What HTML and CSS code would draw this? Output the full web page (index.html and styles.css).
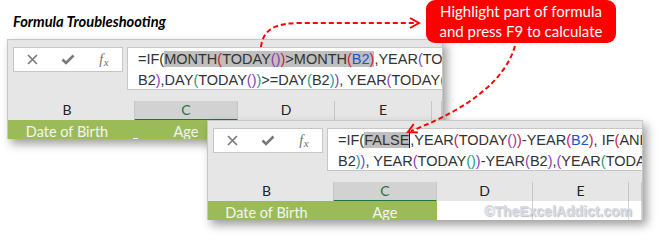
FILE: index.html
```html
<!DOCTYPE html>
<html>
<head>
<meta charset="utf-8">
<link rel="stylesheet" href="styles.css">
</head>
<body>
<div class="canvas">
  <h1 class="title">Formula Troubleshooting</h1>

  <div class="panel p1">
    <div class="bar">
      <div class="btns">
        <span class="slot"><svg width="11" height="11" viewBox="0 0 11 11"><path d="M1 1L10 10M10 1L1 10" stroke="#787878" stroke-width="1.6" fill="none"/></svg></span>
        <span class="slot"><svg width="14" height="11" viewBox="0 0 14 11"><path d="M1.5 5.5L5 9L12.5 1.5" stroke="#787878" stroke-width="2.6" fill="none"/></svg></span>
        <span class="slot fx"><i>f</i><i class="x">x</i></span>
      </div>
      <div class="fbox">
        <div class="line">=IF(<span class="hl">MONTH<span class="r">(</span>TODAY<span class="p">()</span><span class="r">)</span>&gt;MONTH<span class="r">(</span><span class="b">B2</span><span class="r">)</span></span>,YEAR<span class="p">(</span>TODAY<span class="g">()</span><span class="p">)</span>-YEAR(B2)</div>
        <div class="line">B2<span class="p">)</span>,DAY<span class="g">(</span>TODAY<span class="p">()</span><span class="g">)</span>&gt;=DAY<span class="g">(</span>B2<span class="g">)</span><span class="p">)</span>, YEAR<span class="p">(</span>TODAY<span class="g">()</span><span class="p">)</span></div>
      </div>
    </div>
    <div class="cols c1 head">
      <div class="hc bcol">B</div>
      <div class="hc sel">C</div>
      <div class="hc">D</div>
      <div class="hc">E</div>
      <div class="hc"></div>
    </div>
    <div class="cols c1 data">
      <div class="dc green bcol">Date of Birth</div>
      <div class="dc green">Age</div>
      <div class="dc"></div>
      <div class="dc"></div>
      <div class="dc"></div>
    </div>
    <span class="handle"></span>
  </div>

  <div class="panel p2">
    <div class="bar">
      <div class="btns">
        <span class="slot"><svg width="11" height="11" viewBox="0 0 11 11"><path d="M1 1L10 10M10 1L1 10" stroke="#787878" stroke-width="1.6" fill="none"/></svg></span>
        <span class="slot"><svg width="14" height="11" viewBox="0 0 14 11"><path d="M1.5 5.5L5 9L12.5 1.5" stroke="#787878" stroke-width="2.6" fill="none"/></svg></span>
        <span class="slot fx"><i>f</i><i class="x">x</i></span>
      </div>
      <div class="fbox">
        <div class="line">=IF(<span class="hl">FALSE</span><span class="caret"></span>,YEAR<span class="r">(</span>TODAY<span class="p">()</span><span class="r">)</span>-YEAR<span class="r">(</span><span class="b">B2</span><span class="r">)</span>, IF<span class="r">(</span>AND<span class="p">(</span>MONTH</div>
        <div class="line">B2<span class="g">)</span><span class="p">)</span>, YEAR<span class="p">(</span>TODAY<span class="g">()</span><span class="p">)</span>-YEAR<span class="p">(</span>B2<span class="p">)</span>,<span class="p">(</span>YEAR<span class="g">(</span>TODAY<span class="p">()</span></div>
      </div>
    </div>
    <div class="cols c2 head">
      <div class="hc bcol">B</div>
      <div class="hc sel">C</div>
      <div class="hc">D</div>
      <div class="hc">E</div>
      <div class="hc"></div>
    </div>
    <div class="cols c2 data">
      <div class="dc green bcol">Date of Birth</div>
      <div class="dc green">Age</div>
      <div class="dc white"></div>
      <div class="dc white"></div>
      <div class="dc white"></div>
    </div>
  </div>

  <div class="watermark">©TheExcelAddict.com</div>

  <svg class="arrows" width="663" height="241" viewBox="0 0 663 241">
    <path d="M261,47 C263,28 278,23 300,23 L417,23" stroke="#ff0000" stroke-width="2" stroke-dasharray="5 3" fill="none"/>
    <path d="M410,18 L419,23 L410,28" stroke="#ff0000" stroke-width="2" fill="none"/>
    <path d="M515,46 C505,80 470,108 411,131" stroke="#ff0000" stroke-width="2" stroke-dasharray="5 3" fill="none"/>
    <path d="M413.7,124 L408,132 L417.9,132.5" stroke="#ff0000" stroke-width="2" fill="none"/>
  </svg>

  <div class="callout">Highlight part of formula<br>and press F9 to calculate</div>
</div>
</body>
</html>
```

FILE: styles.css
```css
* { box-sizing: border-box; }
html, body { margin: 0; padding: 0; background: #ffffff; }
.canvas {
  position: relative;
  width: 663px;
  height: 241px;
  overflow: hidden;
  font-family: "Liberation Sans", Arial, sans-serif;
}
.title {
  margin: 0;
  padding: 13px 0 0 13px;
  font-family: Lato, "Liberation Sans", sans-serif;
  font-style: italic;
  font-weight: 700;
  font-size: 14.7px;
  line-height: 16px;
  color: #000;
}
.panel {
  position: absolute;
  width: 436px;
  height: 100px;
  background: #e6e6e6;
  border: 1px solid #c6c6c6;
  border-bottom: 0;
  box-shadow: 4px 5px 9px rgba(0, 0, 0, 0.38);
  overflow: hidden;
}
.p1 { left: 7px; top: 39px; }
.p2 { left: 207px; top: 120px; }
.bar {
  display: flex;
  gap: 4px;
  padding: 7px 0 0 5px;
}
.btns {
  flex: 0 0 110px;
  height: 25px;
  display: flex;
  align-items: center;
  background: #ffffff;
  border: 1px solid #c6c6c6;
}
.slot {
  flex: 0 0 36px;
  height: 23px;
  display: flex;
  align-items: center;
  justify-content: center;
}
.fx {
  font-family: "Liberation Serif", serif;
  font-size: 14px;
  color: #707070;
  padding-top: 1px;
}
.fx .x { font-size: 11px; position: relative; top: 2px; margin-left: 0.5px; }
.fbox {
  flex: 1;
  height: 43px;
  background: #ffffff;
  border: 1px solid #c6c6c6;
  border-right: 0;
  padding: 1px 0 0 10px;
  font-size: 14.5px;
  line-height: 21px;
  color: #333333;
  white-space: nowrap;
  overflow: hidden;
}
.hl { background: #bfbfbf; }
.r { color: #d4163c; }
.p { color: #8a3cb8; }
.g { color: #16a07e; }
.b { color: #1a55cc; }
.caret {
  display: inline-block;
  width: 1px;
  height: 16px;
  background: #222;
  vertical-align: -3px;
}
.cols { display: grid; }
.c1 { grid-template-columns: 126px 104px 97px 97px 1fr; }
.c2 { grid-template-columns: 125px 104px 96px 96px 1fr; }
.head {
  margin-top: 11px;
  height: 19px;
}
.hc {
  font-family: Lato, "Liberation Sans", sans-serif;
  font-size: 14px;
  line-height: 18px;
  color: #222;
  text-align: center;
  border-right: 1px solid #c6c6c6;
  border-bottom: 1px solid #c6c6c6;
}
.hc.bcol { border-right: 0; padding-right: 8px; }
.hc.sel {
  background: #d2d2d2;
  color: #217346;
  border-bottom: 2px solid #217346;
  border-left: 1px solid #c6c6c6;
}
.data { height: 19px; }
.dc {
  height: 19px;
  overflow: hidden;
  font-family: Lato, "Liberation Sans", sans-serif;
  font-size: 14.5px;
  line-height: 19px;
  padding-top: 2px;
  text-align: center;
  color: #f4f4f4;
}
.dc.bcol { padding-right: 8px; }
.green { background: #9bbb59; }
.white { background: #ffffff; border-right: 1px solid #d4d4d4; }
.handle {
  position: absolute;
  left: 125px;
  top: 98px;
  width: 5px;
  height: 1px;
  background: #ffffff;
}
.watermark {
  position: absolute;
  left: 484px;
  top: 203px;
  font-family: "Liberation Sans", Arial, sans-serif;
  font-weight: 700;
  font-size: 14px;
  line-height: 16px;
  color: #d6dce5;
  text-shadow: 1px 1px 1px rgba(80, 90, 110, 0.4);
}
.arrows {
  position: absolute;
  left: 0;
  top: 0;
  pointer-events: none;
}
.callout {
  position: absolute;
  left: 426px;
  top: 0;
  width: 190px;
  height: 43px;
  border-radius: 9px;
  background: #ff0000;
  color: #ffffff;
  text-align: center;
  font-family: Lato, "Liberation Sans", sans-serif;
  font-size: 15px;
  line-height: 19.5px;
  padding-top: 2px;
}
```
